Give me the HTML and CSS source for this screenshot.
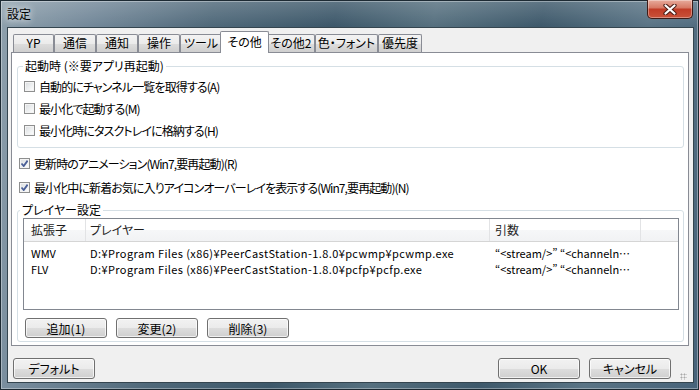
FILE: index.html
```html
<!DOCTYPE html>
<html lang="ja">
<head>
    <meta charset="UTF-8">
    <title>設定</title>
    <link rel="stylesheet" href="styles.css">
</head>
<body>
    <div class="window">
        <div class="titlebar">
            <span class="title">設定</span>
            <div class="close-btn">
                <svg width="14" height="11" viewBox="0 0 14 11">
                    <path d="M2.5 1.5 L11.5 9.5 M11.5 1.5 L2.5 9.5" stroke="#4a1c15" stroke-width="4.2" stroke-linecap="round"/>
                    <path d="M2.5 1.5 L11.5 9.5 M11.5 1.5 L2.5 9.5" stroke="#ffffff" stroke-width="2.2" stroke-linecap="round"/>
                </svg>
            </div>
        </div>

        <div class="client">
            <div class="tabs">
                <div class="tab w41">YP</div>
                <div class="tab w42">通信</div>
                <div class="tab w42">通知</div>
                <div class="tab w42">操作</div>
                <div class="tab w42">ツール</div>
                <div class="tab active">その他</div>
                <div class="tab w48">その他2</div>
                <div class="tab w63">色・フォント</div>
                <div class="tab w44">優先度</div>
            </div>

            <div class="panel">
                <fieldset class="group startup">
                    <legend>起動時 (※要アプリ再起動)</legend>
                    <label class="check"><span class="box"></span>自動的にチャンネル一覧を取得する(A)</label>
                    <label class="check"><span class="box"></span>最小化で起動する(M)</label>
                    <label class="check"><span class="box"></span>最小化時にタスクトレイに格納する(H)</label>
                </fieldset>

                <div class="loose-checks">
                    <label class="check tall"><span class="box checked"></span>更新時のアニメーション(Win7,要再起動)(R)</label>
                    <label class="check tall"><span class="box checked"></span>最小化中に新着お気に入りアイコンオーバーレイを表示する(Win7,要再起動)(N)</label>
                </div>

                <fieldset class="group players">
                    <legend>プレイヤー設定</legend>
                    <div class="listview">
                        <div class="lv-row lv-header">
                            <div class="col c1">拡張子</div>
                            <div class="col c2">プレイヤー</div>
                            <div class="col c3">引数</div>
                            <div class="col c4"></div>
                        </div>
                        <div class="lv-body">
                            <div class="lv-row">
                                <div class="col c1">WMV</div>
                                <div class="col c2">D:¥Program Files (x86)¥PeerCastStation-1.8.0¥pcwmp¥pcwmp.exe</div>
                                <div class="col c3">“&lt;stream/&gt;” “&lt;channeln…</div>
                            </div>
                            <div class="lv-row">
                                <div class="col c1">FLV</div>
                                <div class="col c2">D:¥Program Files (x86)¥PeerCastStation-1.8.0¥pcfp¥pcfp.exe</div>
                                <div class="col c3">“&lt;stream/&gt;” “&lt;channeln…</div>
                            </div>
                        </div>
                    </div>
                    <div class="btn-row">
                        <button class="btn">追加(1)</button>
                        <button class="btn">変更(2)</button>
                        <button class="btn">削除(3)</button>
                    </div>
                </fieldset>
            </div>

            <div class="footer">
                <button class="btn">デフォルト</button>
                <button class="btn ok">OK</button>
                <button class="btn">キャンセル</button>
                <span class="grip"></span>
            </div>
        </div>
    </div>
</body>
</html>
```

FILE: styles.css
```css
* {
    margin: 0;
    padding: 0;
    box-sizing: border-box;
}

body {
    width: 699px;
    height: 390px;
    overflow: hidden;
    font-family: "Noto Sans CJK JP", "Noto Sans", sans-serif;
    font-size: 11px;
    font-feature-settings: "palt";
    color: #000;
}

.window {
    width: 699px;
    height: 390px;
    display: flex;
    flex-direction: column;
    padding: 0 5px 7px 7px;
    background:
        linear-gradient(180deg, rgba(255, 255, 255, 0.18) 0px, rgba(255, 255, 255, 0) 26px),
        linear-gradient(100deg, #8fa1ad 0%, #74899a 12%, #50697a 28%, #3d586a 44%, #56707f 57%, #3e596b 71%, #5a7485 85%, #47637a 100%);
    box-shadow: inset 0 0 0 1px #1d2a33, inset 0 0 0 2px rgba(255, 255, 255, 0.35);
}

/* title bar */
.titlebar {
    height: 27px;
    display: flex;
    align-items: flex-start;
}

.title {
    margin-top: 6px;
    font-size: 12px;
    line-height: 16px;
    text-shadow: 0 0 6px rgba(255, 255, 255, 0.9), 0 0 10px rgba(255, 255, 255, 0.6);
}

.close-btn {
    margin-left: auto;
    margin-right: 1px;
    width: 46px;
    height: 19px;
    display: flex;
    align-items: center;
    justify-content: center;
    border: 1px solid #3e1c17;
    border-top: none;
    border-radius: 0 0 5px 5px;
    background: linear-gradient(180deg, #e7ab9c 0%, #d77a66 42%, #c13c27 52%, #c9523a 100%);
    box-shadow: inset 0 0 0 1px rgba(255, 255, 255, 0.35);
}

/* client area */
.client {
    flex: 1;
    display: flex;
    flex-direction: column;
    border: 1px solid #34454f;
    background: #f0f0f0;
    padding: 3px 4px 0 3px;
}

.tabs {
    height: 21px;
    display: flex;
    align-items: flex-end;
    padding-left: 2px;
    font-size: 12px;
}

.tab {
    height: 18px;
    line-height: 16px;
    text-align: center;
    border: 1px solid #898c95;
    border-bottom: none;
    border-radius: 2px 2px 0 0;
    background: linear-gradient(180deg, #f3f3f3 0%, #ebebeb 50%, #dddddd 51%, #cfcfcf 100%);
    white-space: nowrap;
}

.w41 { width: 41px; }
.w42 { width: 42px; }
.w44 { width: 44px; }
.w48 { width: 48px; }
.w63 { width: 63px; }

.tab.active {
    position: relative;
    z-index: 1;
    width: 49px;
    height: 22px;
    margin: 0 -2px -1px -2px;
    line-height: 19px;
    background: #fff;
}

.panel {
    height: 294px;
    border: 1px solid #898c95;
    background: #fff;
    padding: 5px 4px 0 5px;
}

/* group boxes */
.group {
    border: 1px solid #d5dfe5;
    border-radius: 3px;
    box-shadow: inset 0 0 0 1px #fff;
}

.group legend {
    padding: 0 2px;
    font-size: 12px;
    line-height: 16px;
}

.startup {
    padding: 1px 4px 6px 5px;
}

.players {
    margin-top: 3px;
    padding: 0 4px 3px 5px;
}

.players legend {
    margin-left: -3px;
}

.check {
    height: 22px;
    display: flex;
    align-items: center;
    gap: 4px;
    font-size: 12px;
    letter-spacing: -0.9px;
    white-space: nowrap;
}

.startup .check {
    padding-left: 1px;
}

.check.tall {
    height: 24px;
}

.loose-checks {
    margin-top: 3px;
    padding-left: 2px;
}

.box {
    flex: none;
    width: 11px;
    height: 11px;
    border: 1px solid #8e8f8f;
    background: linear-gradient(135deg, #d9dcdf 0%, #eef0f1 55%, #ffffff 100%);
    box-shadow: inset 0 0 0 1px #f4f4f4;
}

.box.checked {
    background:
        url("data:image/svg+xml,%3Csvg xmlns='http://www.w3.org/2000/svg' width='9' height='9'%3E%3Cpath d='M1.5 4.5 L3.7 7 L7.6 1.6' fill='none' stroke='%234a5f97' stroke-width='1.8'/%3E%3C/svg%3E") center / 9px 9px no-repeat,
        linear-gradient(135deg, #d9dcdf 0%, #eef0f1 55%, #ffffff 100%);
}

/* list view */
.listview {
    height: 92px;
    border: 1px solid #828790;
    background: #fff;
}

.lv-row {
    display: flex;
    height: 16px;
    line-height: 16px;
    white-space: nowrap;
}

.lv-body .c2 {
    letter-spacing: 0.4px;
}

.lv-header {
    height: 23px;
    line-height: 22px;
    font-size: 12px;
    border-bottom: 1px solid #d5d5d5;
    background: linear-gradient(180deg, #ffffff 0%, #ffffff 50%, #f6f7f8 51%, #f1f2f4 100%);
    color: #1e1e1e;
}

.lv-header .col {
    border-right: 1px solid #e2e3e5;
}

.lv-body {
    padding-top: 3px;
}

.col {
    overflow: hidden;
    padding-left: 7px;
}

.c1 { width: 62px; }
.c2 { width: 404px; padding-left: 4px; }
.c3 { width: 151px; padding-left: 5px; }
.c4 { flex: 1; }

.lv-header .c4 {
    border-right: none;
}

/* buttons */
.btn-row {
    display: flex;
    gap: 9px;
    margin-top: 8px;
    padding-left: 2px;
}

.btn {
    width: 82px;
    height: 20px;
    font-family: inherit;
    font-size: 12px;
    font-feature-settings: "palt";
    color: #000;
    border: 1px solid #707070;
    border-radius: 3px;
    background: linear-gradient(180deg, #f2f2f2 0%, #ebebeb 50%, #dddddd 51%, #cfcfcf 100%);
    box-shadow: inset 0 0 0 1px rgba(255, 255, 255, 0.7);
}

.footer {
    display: flex;
    gap: 9px;
    margin-top: 12px;
    padding: 0 0 0 2px;
}

.footer .btn {
    height: 21px;
}

.footer .ok {
    margin-left: auto;
}

.grip {
    width: 7px;
    height: 7px;
    margin: 15px 2px 0 0;
    background: radial-gradient(circle, #a8a8a8 0.8px, transparent 1.2px) 0 0 / 3px 3px;
}
```
